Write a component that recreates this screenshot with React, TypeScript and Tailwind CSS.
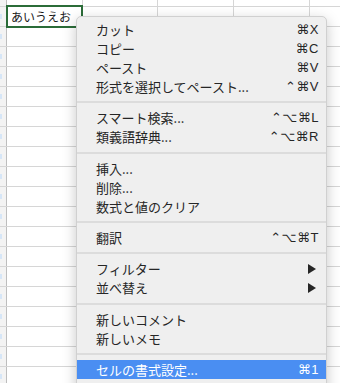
import React from 'react';

type Item =
  | { type: 'item'; label: string; shortcut?: string; submenu?: boolean; active?: boolean }
  | { type: 'sep'; tall?: boolean };

const menuItems: Item[] = [
  { type: 'item', label: 'カット', shortcut: '⌘X' },
  { type: 'item', label: 'コピー', shortcut: '⌘C' },
  { type: 'item', label: 'ペースト', shortcut: '⌘V' },
  { type: 'item', label: '形式を選択してペースト...', shortcut: '⌃⌘V' },
  { type: 'sep' },
  { type: 'item', label: 'スマート検索...', shortcut: '⌃⌥⌘L' },
  { type: 'item', label: '類義語辞典...', shortcut: '⌃⌥⌘R' },
  { type: 'sep', tall: true },
  { type: 'item', label: '挿入...' },
  { type: 'item', label: '削除...' },
  { type: 'item', label: '数式と値のクリア' },
  { type: 'sep' },
  { type: 'item', label: '翻訳', shortcut: '⌃⌥⌘T' },
  { type: 'sep' },
  { type: 'item', label: 'フィルター', submenu: true },
  { type: 'item', label: '並べ替え', submenu: true },
  { type: 'sep', tall: true },
  { type: 'item', label: '新しいコメント' },
  { type: 'item', label: '新しいメモ' },
  { type: 'sep' },
  { type: 'item', label: 'セルの書式設定...', shortcut: '⌘1', active: true },
  { type: 'item', label: 'ドロップダウン リストから選択...' },
];

const jp = { fontFamily: '"Noto Sans CJK JP", "DejaVu Sans", sans-serif' };
const keys = { fontFamily: '"Liberation Sans", "DejaVu Sans", sans-serif' };

function SheetGrid() {
  const rows = Array.from({ length: 19 });
  const cols = ['w-[76px]', 'w-[75px]', 'w-[76px]', 'w-[76px]'];

  return (
    <div className="flex flex-col">
      {/* cropped header row */}
      <div className="flex h-[7px] border-b border-[#d6d6d6]">
        <div className="w-[7px] bg-[#f3f3f3] border-r border-[#bdbdbd]" />
        {cols.map((w, i) => (
          <div key={i} className={`${w} border-r border-[#d6d6d6]`} />
        ))}
      </div>
      {rows.map((_, r) => (
        <div key={r} className="flex h-[20px] border-b border-[#d6d6d6]">
          <div className="w-[7px] bg-[#f3f3f3] border-r border-[#bdbdbd] flex items-center">
            <div className="w-[2px] h-[5px] bg-[#d6e6f7]" />
          </div>
          {cols.map((w, i) => (
            <div key={i} className={`${w} border-r border-[#d6d6d6]`} />
          ))}
        </div>
      ))}
    </div>
  );
}

function Arrow() {
  return (
    <svg width="8" height="10" viewBox="0 0 8 10">
      <path d="M0 0 L8 5 L0 10 Z" fill="#262626" />
    </svg>
  );
}

function ContextMenu() {
  return (
    <div className="absolute left-[76px] top-[16px] w-[251px] h-[400px] bg-[#efefef] rounded-[5px] border border-[#d0d0d0] shadow-[0_4px_14px_rgba(0,0,0,0.22)] pt-[3px] overflow-hidden">
      {menuItems.map((it, i) =>
        it.type === 'sep' ? (
          <div key={i} className={`${it.tall ? 'h-[13px]' : 'h-[12px]'} flex items-center`}>
            <div className="w-full h-[2px] bg-[#dcdcdc]" />
          </div>
        ) : (
          <div
            key={i}
            className={`h-[19px] flex items-center justify-between pl-[19px] pr-[7px] ${
              it.active ? 'bg-[#4a8ef2] text-white' : 'text-[#262626]'
            }`}
          >
            <span className="text-[13px] leading-none whitespace-nowrap" style={jp}>
              {it.label}
            </span>
            {it.shortcut && (
              <span className="text-[13px] leading-none tracking-[0.5px]" style={keys}>
                {it.shortcut}
              </span>
            )}
            {it.submenu && (
              <span className="pr-[3px] flex items-center">
                <Arrow />
              </span>
            )}
          </div>
        )
      )}
    </div>
  );
}

export default function App() {
  return (
    <div className="relative w-[340px] h-[383px] overflow-hidden bg-white">
      <SheetGrid />
      {/* selected cell */}
      <div className="absolute left-[6px] top-[5px] w-[77px] h-[23px] border-2 border-[#2b6c38] bg-white flex items-center pl-[3px]">
        <span className="text-[12px] leading-none text-[#1a1a1a]" style={jp}>
          あいうえお
        </span>
      </div>
      <ContextMenu />
    </div>
  );
}
